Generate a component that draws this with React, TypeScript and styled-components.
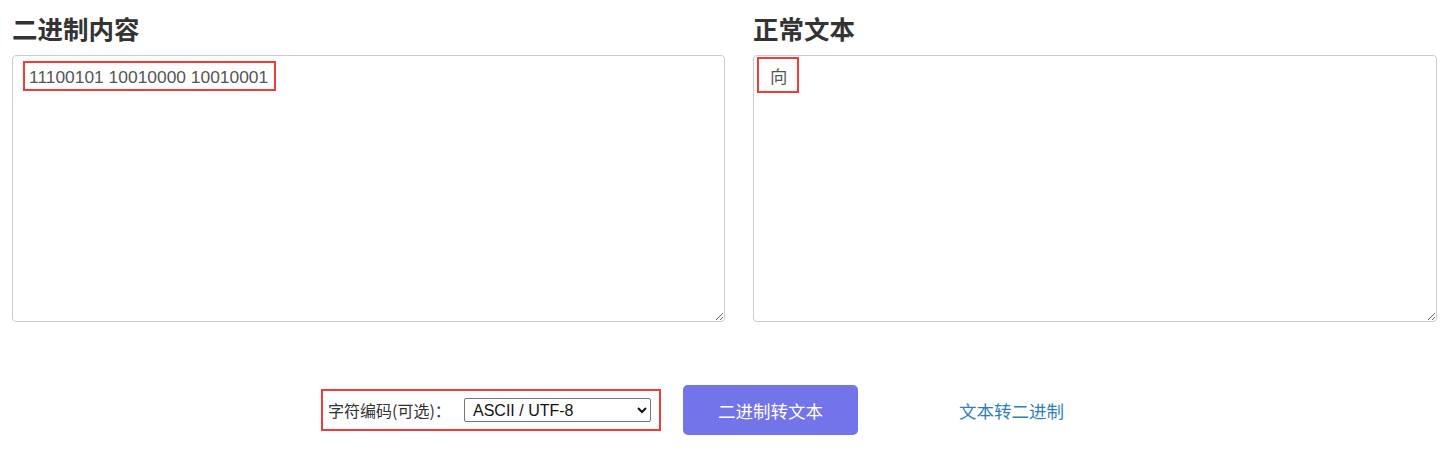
import React, { useState } from 'react';
import styled, { createGlobalStyle } from 'styled-components';

const GlobalStyle = createGlobalStyle`
  body {
    margin: 0;
    background: #fff;
    font-family: 'Liberation Sans', 'Noto Sans CJK SC', Arial, sans-serif;
    color: #333;
  }
`;

const Page = styled.div`
  padding: 14px 15px 0 12px;
`;

const Columns = styled.div`
  display: grid;
  grid-template-columns: 713px 1fr;
  column-gap: 28px;
`;

const Column = styled.div`
  display: flex;
  flex-direction: column;
`;

const Heading = styled.h2`
  margin: 0 0 14px;
  height: 27px;
  font-family: 'Noto Sans CJK SC', sans-serif;
  font-size: 25.5px;
  font-weight: 700;
  line-height: 27px;
  color: #333;
`;

const Field = styled.div`
  position: relative;
`;

const TextArea = styled.textarea`
  display: block;
  box-sizing: border-box;
  width: 100%;
  height: 267px;
  margin: 0;
  padding: 11px 16px;
  border: 1px solid #ccc;
  border-radius: 4px;
  font-family: 'Liberation Sans', 'Noto Sans CJK SC', Arial, sans-serif;
  font-size: 17.4px;
  line-height: 20px;
  color: #555;
  background: #fff;
  resize: both;
  outline: none;
`;

const Mark = styled.span<{ $left: number; $top: number; $width: number; $height: number }>`
  position: absolute;
  left: ${(p) => p.$left}px;
  top: ${(p) => p.$top}px;
  width: ${(p) => p.$width}px;
  height: ${(p) => p.$height}px;
  box-sizing: border-box;
  border: 2px solid #f23b3b;
  pointer-events: none;
`;

const Actions = styled.div`
  display: flex;
  align-items: center;
  justify-content: center;
  margin-top: 63px;
  padding-right: 29px;
`;

const EncodingBox = styled.div`
  display: flex;
  align-items: center;
  box-sizing: border-box;
  width: 340px;
  height: 42px;
  padding: 0 8px 0 5px;
  border: 2px solid #f23b3b;
`;

const Label = styled.label`
  font-family: 'Noto Sans CJK SC', sans-serif;
  font-size: 16px;
  color: #333;
  margin-right: 2px;
  white-space: nowrap;
`;

const Select = styled.select`
  width: 187px;
  height: 24px;
  margin-left: auto;
  padding: 0 4px;
  border: 1px solid #767676;
  border-radius: 2px;
  background: #fff;
  font-family: 'Liberation Sans', Arial, sans-serif;
  font-size: 16px;
  color: #111;
`;

const PrimaryButton = styled.button`
  width: 175px;
  height: 50px;
  margin-left: 22px;
  border: none;
  border-radius: 5px;
  background: #7373ea;
  color: #fff;
  font-family: 'Noto Sans CJK SC', sans-serif;
  font-size: 17.5px;
  cursor: pointer;
`;

const LinkButton = styled.button`
  width: 175px;
  height: 50px;
  margin-left: 66px;
  border: none;
  background: transparent;
  color: #2f7fc0;
  font-family: 'Noto Sans CJK SC', sans-serif;
  font-size: 17.5px;
  cursor: pointer;
`;

export default function App() {
  const [binary, setBinary] = useState('11100101 10010000 10010001');
  const [text, setText] = useState('向');

  return (
    <Page>
      <GlobalStyle />
      <Columns>
        <Column>
          <Heading>二进制内容</Heading>
          <Field>
            <TextArea value={binary} onChange={(e) => setBinary(e.target.value)} />
            <Mark $left={11} $top={6} $width={253} $height={30} />
          </Field>
        </Column>
        <Column>
          <Heading>正常文本</Heading>
          <Field>
            <TextArea value={text} onChange={(e) => setText(e.target.value)} />
            <Mark $left={4} $top={2} $width={42} $height={36} />
          </Field>
        </Column>
      </Columns>
      <Actions>
        <EncodingBox>
          <Label>字符编码(可选)：</Label>
          <Select defaultValue="utf8">
            <option value="utf8">ASCII / UTF-8</option>
            <option value="gbk">GBK</option>
          </Select>
        </EncodingBox>
        <PrimaryButton>二进制转文本</PrimaryButton>
        <LinkButton>文本转二进制</LinkButton>
      </Actions>
    </Page>
  );
}
